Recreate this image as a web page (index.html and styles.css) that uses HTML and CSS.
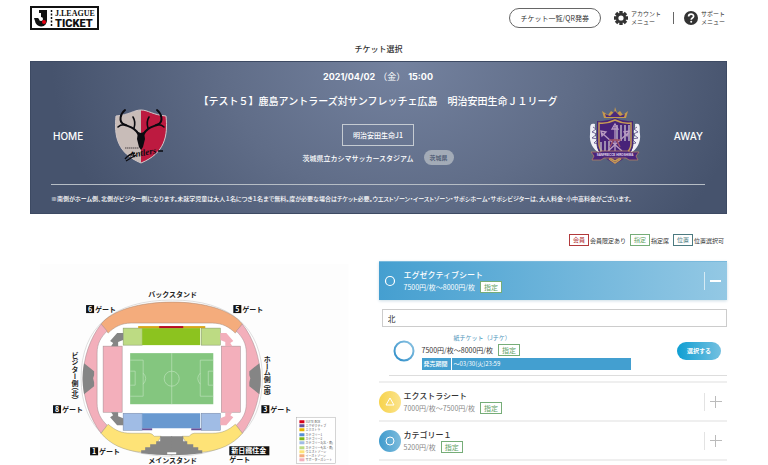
FILE: index.html
```html
<!DOCTYPE html>
<html lang="ja">
<head>
    <meta charset="UTF-8">
    <meta name="viewport" content="width=device-width, initial-scale=1">
    <title>チケット選択</title>
    <link rel="stylesheet" href="styles.css">
</head>
<body>
    <header class="header">
        <a href="#" class="logo" aria-label="J.LEAGUE TICKET">
            <svg width="69" height="24" viewBox="0 0 69 24">
                <rect x="1" y="1" width="67" height="22" fill="#fff" stroke="#111" stroke-width="2"/>
                <path d="M9 4h8v10a6 6 0 0 1-12 1l-1-3h4c1 2 3 1 3-1V7H9z" fill="#111"/>
                <circle cx="11" cy="13" r="2" fill="#fff"/>
                <circle cx="14" cy="16" r="2" fill="#e60012"/>
                <path d="M21.500 4v17" stroke="#111" stroke-width="1.500" stroke-dasharray="2 1.500"/>
                <text x="25" y="10" class="logo-league">J.LEAGUE</text>
                <text x="25" y="21" class="logo-ticket">TICKET</text>
            </svg>
        </a>
        <nav class="header-nav">
            <button class="qr-button">チケット一覧/QR発券</button>
            <a href="#" class="menu-link">
                <svg width="14" height="14" viewBox="0 0 14 14">
                    <g stroke="#333" stroke-width="3.400">
                        <path d="M7 0v14M0 7h14M2 2l10 10M12 2L2 12"/>
                    </g>
                    <circle cx="7" cy="7" r="5" fill="#333"/>
                    <circle cx="7" cy="7" r="2.600" fill="#fff"/>
                </svg>
                <span>アカウント<br>メニュー</span>
            </a>
            <a href="#" class="menu-link menu-support">
                <svg width="14" height="14" viewBox="0 0 14 14">
                    <circle cx="7" cy="7" r="7" fill="#333"/>
                    <path d="M4.600 5.500C4.600 2.300 9.600 2.300 9.600 5.300C9.600 7 7.200 7 7.200 8.800" fill="none" stroke="#fff" stroke-width="1.700"/>
                    <circle cx="7.200" cy="10.800" r="1" fill="#fff"/>
                </svg>
                <span>サポート<br>メニュー</span>
            </a>
        </nav>
    </header>

    <main class="main">
        <h1 class="page-title">チケット選択</h1>

        <section class="match">
            <div class="match-main">
                <div class="team">
                    <span>HOME</span>
                    <svg width="54" height="58" viewBox="0 0 54 58">
                        <path d="M27 3C34 3 39 8 52 9C54 29 51 46 27 56C3 46 0 29 2 9C15 8 20 3 27 3z" fill="#c8bcb8"/>
                        <path d="M27 3C34 3 39 8 52 9C54 29 51 46 27 56z" fill="#bd1a40"/>
                        <path d="M27 3C34 3 39 8 52 9C54 29 51 46 27 56C3 46 0 29 2 9C15 8 20 3 27 3z" fill="none" stroke="#cfc6c8" stroke-width="1"/>
                        <g fill="none" stroke="#0b0b10" stroke-linecap="round">
                            <path d="M25 28C21 20 15 20 9 17C5 14 6 7 11 3M29 28C33 20 39 20 45 17C49 14 48 7 43 3" stroke-width="2"/>
                            <path d="M12 18Q7 17 4 20M20 21Q22 15 19 10M42 18Q47 17 50 20M34 21Q32 15 35 10" stroke-width="1.600"/>
                        </g>
                        <path d="M24 25l3 1 3-1 1 7-2 8-2 3-2-3-2-8z" fill="#0b0b10"/>
                        <text class="antlers" transform="translate(16 51) rotate(-10)">Antlers</text>
                        <path d="M11 52Q15 47 21 46M44 44l5 0M12 54L22 48" fill="none" stroke="#0b0b10" stroke-width="1.300"/>
                        <path d="M11 41h14" stroke="#4b4346" stroke-width="1" stroke-dasharray="1.500 .5"/>
                    </svg>
                </div>
                <div class="match-info">
                    <p class="match-date">2021/04/02<span>（金）</span>15:00</p>
                    <h2 class="match-title">【テスト５】鹿島アントラーズ対サンフレッチェ広島　明治安田生命Ｊ１リーグ</h2>
                    <p class="match-league">明治安田生命J1</p>
                    <p class="match-venue">茨城県立カシマサッカースタジアム<span class="prefecture">茨城県</span></p>
                </div>
                <div class="team">
                    <svg width="54" height="58" viewBox="0 0 54 58">
                        <path d="M16 11L14 4l6 4 3-4 3 2 1-6 2 6 3-2 3 4 5-4-2 7z" fill="#c69a4c"/>
                        <path d="M18 10l-1-3 5 2 5-5 5 5 5-2-1 3z" fill="#4c2a7c"/>
                        <path d="M7 17C0 15 3 23 2 27C1 35 5 43 12 46C6 38 10 33 7 28C10 24 6 22 7 17zM47 17C54 15 51 23 52 27C53 35 49 43 42 46C48 38 44 33 47 28C44 24 48 22 47 17z" fill="#f0f0f7"/>
                        <path d="M5 20l3 2-4 3 5 2-5 4 6 1-4 4 6 1M49 20l-3 2 4 3-5 2 5 4-6 1 4 4-6 1" fill="none" stroke="#54457f" stroke-width=".8"/>
                        <path d="M9 14q9 1 18-3 9 4 18 3v23c0 10-9 15-18 20C18 52 9 47 9 37z" fill="#482379"/>
                        <path d="M11 16q8 1 16-3 8 4 16 3v21c0 8-8 13-16 17-8-4-16-9-16-17z" fill="none" stroke="#c79c55" stroke-width="1.500"/>
                        <path d="M29 18v16M33 18v16M37 18v16M41 18v16M13 35v10M17 34v12M21 34v13" stroke="#b1a6bd" stroke-width="1.600"/>
                        <path d="M27 45V19M24 22l3-5 3 5zM20 44l20-18M36 25l5-1-2 5zM34 44L14 26M14 29l-1-5 5 1z" fill="none" stroke="#b99bc2" stroke-width="1.300"/>
                        <path d="M26 32l-4 8M28 32l4 8M21 33h12" stroke="#9d5066" stroke-width="1.500"/>
                        <path d="M3 45h9l2-1h26l2 1h9l-3 4 2 4h-9l-3-2H16l-3 2H4l2-4z" fill="#4a257d" stroke="#b47f64" stroke-width=".8"/>
                        <text class="sanfrecce" x="27" y="49">SANFRECCE HIROSHIMA</text>
                        <path d="M21 52l6 4 6-4" fill="none" stroke="#c79c55" stroke-width="1.500"/>
                    </svg>
                    <span>AWAY</span>
                </div>
            </div>
            <p class="match-note">※南側がホーム側、北側がビジター側になります。未就学児童は大人１名につき１名まで無料。度が必要な場合はチケット必要。ウエストゾーン・イーストゾーン・サポシホーム・サポシビジターは、大人料金・小中高料金がございます。</p>
        </section>

        <ul class="legend">
            <li><span class="tag tag-member">会員</span>会員限定あり</li>
            <li><span class="tag">指定</span>指定席</li>
            <li><span class="tag tag-position">位置</span>位置選択可</li>
        </ul>

        <div class="columns">
            <div class="stadium">
                <svg class="stadium-map" viewBox="40 264 308 201">
                    <defs>
                        <!-- left half of the stands, mirrored for the right -->
                        <g id="side">
                            <path d="M101 324C90 338 83 358 83 378S90 419 101 433L107 425C101 419 97 413 97 403V353C97 343 101 337 107 331z" fill="#f3afbb" stroke="#a08a8e" stroke-width=".5"/>
                            <path d="M84 363L94 371V375L93 378L94 382V386L84 394Q81 378 84 363z" fill="#858585"/>
                            <path d="M101 433L108 424C115 430 121 433 131 433H149Q152 433 154 436H161L155 446 141 452C123 450 110 444 101 433z" fill="#fee377" stroke="#a39b78" stroke-width=".5"/>
                            <path d="M172 436H160V441H156V444H150V447H145V450H141V453Q156 455 172 455z" fill="#858585"/>
                            <rect x="103" y="346" width="19" height="66" fill="#f3afbb" stroke="#a08a8e" stroke-width=".5"/>
                            <rect x="123" y="328" width="19" height="17" fill="#bddb83" stroke="#819369" stroke-width=".5"/>
                            <rect x="123" y="413" width="19" height="17" fill="#a0bce5" stroke="#7486a4" stroke-width=".5"/>
                            <rect x="142" y="428" width="10" height="2" fill="#67519a"/>
                        </g>
                        <g id="corners">
                            <path d="M123 333H117L110 341 113 343 111 346H118V342L123 340z"/>
                            <path d="M123 425H117L110 417 113 415 111 412H118V416L123 418z"/>
                        </g>
                        <g id="box" fill="none" stroke="#c4e5c2" stroke-width=".6">
                            <path d="M130 360H143V396H130M130 371H135V385H130M143 373Q148 378 143 384"/>
                        </g>
                    </defs>
                    <rect x="40" y="264" width="308" height="201" fill="#fdfdfd"/>
                    <path d="M172 300C230 300 262 327 262 378S230 456 172 456 81 429 81 378 113 300 172 300z" fill="#fff" stroke="#c9c9c9" stroke-width=".6"/>
                    <path d="M101 324C112 310 140 302 172 302S231 310 242 324L235 333C229 327 222 323 212 323H131C121 323 114 327 108 333z" fill="#f4ac7c" stroke="#a38472" stroke-width=".5"/>
                    <use href="#side"/>
                    <use href="#side" transform="translate(343 0) scale(-1 1)"/>
                    <use href="#corners" fill="#858585"/>
                    <use href="#corners" fill="#f3afbb" transform="translate(343 0) scale(-1 1)"/>
                    <rect x="142" y="328" width="58" height="17" fill="#8cc31f"/>
                    <rect x="138" y="326" width="67" height="2" fill="#d7a51a"/>
                    <rect x="159" y="326" width="24" height="2" fill="#b80d25"/>
                    <rect x="142" y="413" width="58" height="15" fill="#6999d0"/>
                    <rect x="167" y="452" width="9" height="2" fill="#fff"/>
                    <rect x="130" y="353" width="83" height="51" fill="#84c67f"/>
                    <path d="M171.500 353v51" stroke="#c4e5c2" stroke-width=".6"/>
                    <circle cx="171.500" cy="378.500" r="7.500" fill="none" stroke="#c4e5c2" stroke-width=".6"/>
                    <use href="#box"/>
                    <use href="#box" transform="translate(343 0) scale(-1 1)"/>

                    <g fill="#111">
                        <rect x="86" y="305" width="8" height="8"/>
                        <rect x="233" y="305" width="8" height="8"/>
                        <rect x="53" y="405" width="8" height="8"/>
                        <rect x="261" y="405" width="8" height="8"/>
                        <rect x="90" y="447" width="8" height="8"/>
                        <rect x="229" y="446" width="40" height="9"/>
                    </g>
                    <g class="map-text">
                        <text x="148" y="297">バックスタンド</text>
                        <text x="148" y="463">メインスタンド</text>
                        <text x="95" y="312">ゲート</text>
                        <text x="242" y="312">ゲート</text>
                        <text x="62" y="412">ゲート</text>
                        <text x="270" y="412">ゲート</text>
                        <text x="99" y="454">ゲート</text>
                        <text x="229" y="462">ゲート</text>
                        <text class="map-vertical" x="75" y="352">ビジター側（北）</text>
                        <text class="map-vertical" x="267" y="356">ホーム側（南）</text>
                    </g>
                    <g class="map-text map-text-light">
                        <text x="88" y="312">6</text>
                        <text x="235" y="312">5</text>
                        <text x="55" y="412">8</text>
                        <text x="263" y="412">3</text>
                        <text x="92" y="454">1</text>
                        <text x="231" y="453">新日鐵住金</text>
                    </g>

                    <rect x="296" y="417" width="39" height="46" fill="#fff" stroke="#aaa" stroke-width=".5"/>
                    <g>
                        <rect x="299" y="420" width="5" height="3" fill="#d7001b"/>
                        <rect x="299" y="424" width="5" height="3" fill="#67519a"/>
                        <rect x="299" y="428" width="5" height="3" fill="#e8b500"/>
                        <rect x="299" y="433" width="5" height="3" fill="#5790d4"/>
                        <rect x="299" y="437" width="5" height="3" fill="#7eb917"/>
                        <rect x="299" y="441" width="5" height="3" fill="#a0bce5"/>
                        <rect x="299" y="446" width="5" height="3" fill="#bddb83"/>
                        <rect x="299" y="450" width="5" height="3" fill="#fee377"/>
                        <rect x="299" y="454" width="5" height="3" fill="#f4ac7c"/>
                        <rect x="299" y="458" width="5" height="3" fill="#f3afbb"/>
                    </g>
                    <g class="map-key">
                        <text x="305" y="423">SUITE BOX</text>
                        <text x="305" y="427">エグゼクティブ</text>
                        <text x="305" y="431">エクストラ</text>
                        <text x="305" y="436">カテゴリー1</text>
                        <text x="305" y="440">カテゴリー2</text>
                        <text x="305" y="444">カテゴリー3(北・南)</text>
                        <text x="305" y="449">カテゴリー4(北・南)</text>
                        <text x="305" y="453">ウエストゾーン</text>
                        <text x="305" y="457">イーストゾーン</text>
                        <text x="305" y="461">サポーターズシート</text>
                    </g>
                </svg>
            </div>

            <div class="seats">
                <button class="seat seat-open">
                    <span class="seat-icon">
                        <svg width="22" height="22" viewBox="0 0 22 22"><circle cx="11" cy="11" r="4.500" fill="none" stroke="#fff" stroke-width="1.200"/></svg>
                    </span>
                    <span class="seat-text">
                        <span class="seat-name">エグゼクティブシート</span>
                        <span class="seat-price">7500円/枚～8000円/枚<span class="tag">指定</span></span>
                    </span>
                    <span class="toggle toggle-minus"></span>
                </button>

                <div class="seat-detail">
                    <input class="area" type="text" value="北" aria-label="エリア">
                    <div class="ticket">
                        <svg class="ring" width="22" height="22" viewBox="0 0 22 22">
                            <defs>
                                <linearGradient id="ringColor" x1="0" y1="1" x2="1" y2="0">
                                    <stop offset="0" stop-color="#2b8cc8"/>
                                    <stop offset="1" stop-color="#8cc3e2"/>
                                </linearGradient>
                            </defs>
                            <circle cx="11" cy="11" r="9.500" fill="#fff" stroke="url(#ringColor)" stroke-width="2"/>
                        </svg>
                        <div class="ticket-text">
                            <h3 class="ticket-name">紙チケット（Jチケ）</h3>
                            <p class="ticket-price">7500円/枚～8000円/枚<span class="tag">指定</span></p>
                            <dl class="period">
                                <dt>発売期間</dt>
                                <dd>～03/30(火)23:59</dd>
                            </dl>
                        </div>
                        <button class="select-button">選択する</button>
                    </div>
                </div>

                <button class="seat">
                    <span class="seat-icon icon-yellow">
                        <svg width="22" height="22" viewBox="0 0 22 22"><path d="M11 7l4 7H7z" fill="none" stroke="#fff"/></svg>
                    </span>
                    <span class="seat-text">
                        <span class="seat-name">エクストラシート</span>
                        <span class="seat-price">7000円/枚～7500円/枚<span class="tag">指定</span></span>
                    </span>
                    <span class="toggle"></span>
                </button>
                <button class="seat seat-last">
                    <span class="seat-icon icon-blue">
                        <svg width="22" height="22" viewBox="0 0 22 22"><circle cx="11" cy="11" r="4" fill="none" stroke="#fff"/></svg>
                    </span>
                    <span class="seat-text">
                        <span class="seat-name">カテゴリー１</span>
                        <span class="seat-price">5200円/枚<span class="tag">指定</span></span>
                    </span>
                    <span class="toggle"></span>
                </button>
            </div>
        </div>
    </main>
</body>
</html>
```
FILE: styles.css
```css
* {
    box-sizing: border-box;
}

body {
    margin: 0;
    padding: 0 41px 0 30px;
    font-family: "Noto Sans CJK JP", sans-serif;
    font-size: 7px;
    color: #333;
    background-color: #fff;
}

h1, h2, h3, p, ul, dl, dd {
    margin: 0;
    padding: 0;
    font-weight: normal;
}

button {
    font-family: inherit;
    cursor: pointer;
}

a {
    color: inherit;
    text-decoration: none;
}

svg {
    display: block;
    flex-shrink: 0;
}

/* header */
.header {
    display: flex;
    justify-content: space-between;
    padding-top: 6px;
}

.logo-league {
    font: bold 8px "Liberation Serif", serif;
    fill: #111;
}

.logo-ticket {
    font: 900 11px Roboto, sans-serif;
    fill: #111;
}

.header-nav {
    display: flex;
    align-items: center;
    padding-right: 2px;
}

.qr-button {
    height: 20px;
    margin-right: 13px;
    padding: 0 11px;
    border: 1px solid #666;
    border-radius: 10px;
    background-color: #fff;
    font-size: 7px;
    line-height: 10px;
    color: #333;
}

.menu-link {
    display: flex;
    align-items: center;
    gap: 3px;
    font-size: 6px;
    line-height: 8px;
}

.menu-support {
    margin-left: 12px;
    padding-left: 11px;
    background: linear-gradient(#666, #666) left center / 1px 12px no-repeat;
}

.page-title {
    margin: 13px 0 6px;
    font-size: 8px;
    line-height: 12px;
    font-weight: 500;
    text-align: center;
}

/* match */
.match {
    padding: 8px 21px 10px 20px;
    border: 1px solid #3d4a63;
    background: radial-gradient(ellipse 50% 180% at 53% 0%, #74829f 0%, #606d88 50%, #46536d 100%);
    color: #fff;
}

.match-main {
    display: flex;
    align-items: flex-end;
    justify-content: space-between;
    margin-bottom: 19px;
}

.team {
    display: flex;
    flex: 0 0 117px;
    align-items: center;
    justify-content: space-between;
    font-family: Inter, sans-serif;
    font-size: 10px;
    font-weight: 500;
}

.team span {
    margin: 0 2px;
}

.antlers {
    font: italic bold 9px "Liberation Serif", serif;
    fill: #0b0b10;
}

.sanfrecce {
    font: bold 3px "Liberation Sans", sans-serif;
    fill: #e6deee;
    text-anchor: middle;
}

.match-info {
    flex: 1;
    text-align: center;
    white-space: nowrap;
}

.match-date {
    font-family: Inter, "Noto Sans CJK JP", sans-serif;
    font-size: 9px;
    line-height: 14px;
    font-weight: bold;
}

.match-date span {
    margin: 0 3px;
    font-weight: normal;
}

.match-title {
    margin-top: 8px;
    font-size: 10px;
    line-height: 18px;
    font-weight: 500;
}

.match-league {
    display: inline-block;
    margin: 14px 0 4px;
    padding: 4px 10px;
    border: 1px solid #c5cbd2;
    line-height: 12px;
    font-weight: 500;
}

.match-venue {
    display: flex;
    align-items: center;
    justify-content: center;
    gap: 10px;
    font-weight: 500;
}

.prefecture {
    padding: 0 6px;
    border-radius: 8px;
    background-color: #a3abb7;
    font-size: 6px;
    line-height: 15px;
    color: #46536d;
}

.match-note {
    padding-top: 10px;
    border-top: 1px solid #b6bdc5;
    font-size: 6px;
    line-height: 8px;
    font-weight: 500;
    font-feature-settings: "palt";
}

/* tags */
.legend {
    display: flex;
    justify-content: flex-end;
    gap: 4px;
    margin: 20px 3px 15px 0;
    list-style-type: none;
    font-size: 6px;
}

.legend li {
    display: flex;
    align-items: center;
    gap: 1px;
}

.tag {
    padding: 0 3px;
    border: 1px solid #76ad78;
    background-color: #fff;
    line-height: 10px;
    color: #5fa263;
}

.tag-member {
    border-color: #b23a3c;
    color: #b0292c;
}

.tag-position {
    border-color: #4c7a80;
    color: #4c7a80;
}

.columns {
    display: grid;
    grid-template-columns: 1fr 1fr;
}

/* stadium */
.stadium {
    padding: 3px 30px 0 10px;
}

.stadium-map {
    width: 100%;
}

.map-text {
    font-size: 7px;
    font-weight: bold;
    fill: #222;
}

.map-text-light {
    fill: #fff;
}

.map-vertical {
    writing-mode: vertical-rl;
    font-feature-settings: "vpal";
}

.map-key {
    font-size: 3px;
    fill: #555;
}

/* seats */
.seat {
    display: flex;
    align-items: center;
    width: 100%;
    height: 39px;
    padding: 0;
    border: 0;
    border-top: 2px solid #efefef;
    background-color: #fff;
    color: #333;
    text-align: left;
}

.seat-open {
    border-top: 1px solid #79b9dc;
    background: linear-gradient(to right, #459fd0, #93c8e4);
    box-shadow: 0 1px 3px #ccdde6;
    color: #fff;
}

.seat-last {
    height: 41px;
    border-bottom: 2px solid #efefef;
}

.seat-icon {
    margin-right: 3px;
    border-radius: 50%;
}

.icon-yellow {
    background: linear-gradient(to right, #f7d34c, #fbe38c);
}

.icon-blue {
    background: linear-gradient(to right, #3f9bcd, #7dbbdc);
}

.seat-text {
    flex: 1;
}

.seat-name {
    display: block;
    font-size: 8px;
    line-height: 12px;
    font-weight: 500;
}

.seat-price,
.ticket-price {
    display: flex;
    align-items: center;
    gap: 5px;
    font-size: 7px;
    line-height: 12px;
}

.seat-price {
    color: #888;
}

.seat-open .seat-price {
    color: #fff;
}

.toggle {
    width: 23px;
    height: 18px;
    border-left: 1px solid #e3e3e3;
    background:
        linear-gradient(#bbb, #bbb) 5px center / 12px 1px no-repeat,
        linear-gradient(#bbb, #bbb) 10px center / 1px 12px no-repeat;
}

.toggle-minus {
    border-color: #d5eaf4;
    background: linear-gradient(#fff, #fff) 5px center / 11px 2px no-repeat;
}

.seat-detail {
    padding: 9px 0 5px 3px;
}

.area {
    display: block;
    width: 100%;
    height: 18px;
    padding: 0 5px;
    border: 1px solid #ccc;
    font-family: inherit;
    font-size: 8px;
    color: #333;
}

.ticket {
    display: flex;
    align-items: center;
    margin-left: 7px;
    padding: 5px 6px 5px 4px;
    border-bottom: 1px solid #ddd;
}

.ticket-text {
    flex: 1;
}

.ring {
    margin-right: 7px;
}

.ticket-name {
    padding-left: 32px;
    font-size: 6px;
    line-height: 12px;
    color: #4a94bb;
}

.period {
    display: flex;
    width: 82%;
    margin-top: 2px;
    background-color: #439fd0;
    font-size: 6px;
    line-height: 12px;
    font-weight: 500;
    color: #fff;
}

.period dt {
    padding: 0 3px 0 2px;
    border-right: 1px solid #fff;
}

.period dd {
    padding-left: 2px;
}

.select-button {
    height: 18px;
    padding: 0 10px;
    border: 0;
    border-radius: 9px;
    background: linear-gradient(to right, #0f9fd3, #74c0e0);
    font-size: 6px;
    line-height: 18px;
    font-weight: bold;
    color: #fff;
}
```
